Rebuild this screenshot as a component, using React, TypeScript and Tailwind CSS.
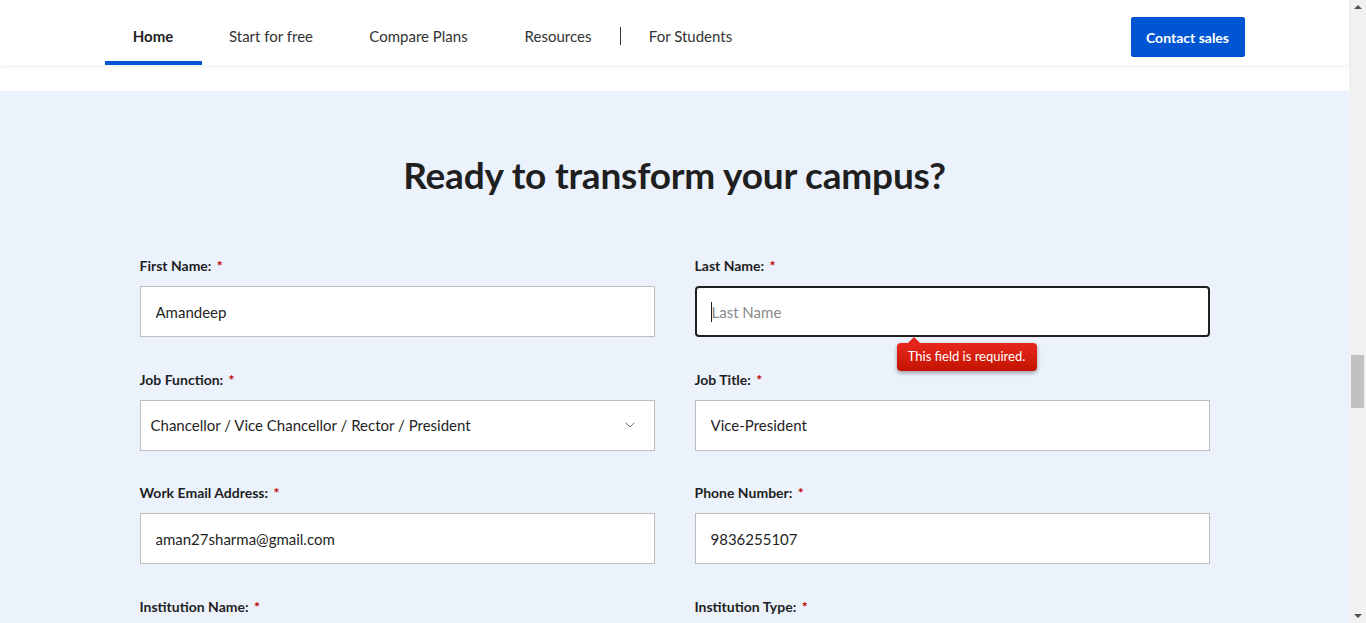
import { ChevronDown } from 'lucide-react';

const font = { fontFamily: 'Lato, "Open Sans", sans-serif' };

const navItems = [
  { label: 'Home', w: 'w-[97px]', active: true },
  { label: 'Start for free', w: 'w-[139px]' },
  { label: 'Compare Plans', w: 'w-[156px]' },
  { label: 'Resources', w: 'w-[123px]' },
];

function Label({ text }: { text: string }) {
  return (
    <div className="text-[14px] leading-[18px] font-bold text-[#1f1f1f] mb-[11px]">
      {text} <span className="text-[#c00000] ml-0.5">*</span>
    </div>
  );
}

function Field({ label, value }: { label: string; value: string }) {
  return (
    <div>
      <Label text={label} />
      <input
        readOnly
        value={value}
        className="w-full h-[51px] bg-white border border-[#bdbdbd] px-[15px] text-[15px] text-[#1f1f1f] outline-none"
        style={font}
      />
    </div>
  );
}

export default function App() {
  return (
    <div className="flex h-[623px] overflow-hidden bg-white" style={font}>
      <div className="flex-1 flex flex-col min-h-0">
        {/* top nav */}
        <header className="h-[65px] shrink-0 bg-white shadow-[0_2px_4px_rgba(0,0,0,0.06)] relative z-10">
          <div className="w-[1140px] mx-auto h-full flex items-center justify-between">
            <nav className="flex items-stretch h-full">
              {navItems.map((n) => (
                <a key={n.label}
                  className={`${n.w} pt-[11px] flex items-center justify-center text-[15px] border-b-4 ${n.active ? 'font-bold text-[#1f1f1f] border-[#0056d2]' : 'text-[#333] border-transparent'}`}>
                  {n.label}
                </a>
              ))}
              <div className="flex items-center pt-[11px] pb-1"><span className="block w-px h-[18px] bg-[#333]" /></div>
              <a className="w-[140px] pt-[11px] flex items-center justify-center text-[15px] text-[#333] border-b-4 border-transparent">For Students</a>
            </nav>
            <button className="w-[114px] h-[40px] mt-[9px] bg-[#0056d2] text-white text-[14px] font-bold rounded-[2px]">
              Contact sales
            </button>
          </div>
        </header>
        <div className="h-[26px] shrink-0 bg-white" />

        {/* form section */}
        <section className="flex-1 shrink-0 bg-[#ebf2fc] pt-[62px]">
          <h1 className="text-center text-[37px] leading-[44px] font-bold text-[#1f1f1f] tracking-[-0.2px]">
            Ready to transform your campus?
          </h1>
          <div className="w-[1070px] mx-auto mt-[60px] grid grid-cols-2 gap-x-10 gap-y-[33.5px]">
            <Field label="First Name:" value="Amandeep" />
            <div>
              <Label text="Last Name:" />
              <div className="relative">
                <input
                  readOnly
                  placeholder="Last Name"
                  className="w-full h-[51px] bg-white border-2 border-[#1f1f1f] rounded-[4px] px-[15px] text-[15px] placeholder:text-[#8a8a8a] outline-none"
                  style={font}
                />
                <span className="absolute left-[16px] top-[16px] w-px h-[20px] bg-[#1f1f1f]" />
                <div className="absolute left-[202px] top-[57px] z-10">
                  <span className="absolute left-[11px] -top-[6px] w-0 h-0 border-x-[6px] border-x-transparent border-b-[6px] border-b-[#e3221a]" />
                  <div className="w-[140px] h-[28px] flex items-center justify-center rounded-[4px] bg-gradient-to-b from-[#e8271c] to-[#c21400] text-white text-[13px] shadow-[0_2px_4px_rgba(0,0,0,0.35)]">
                    This field is required.
                  </div>
                </div>
              </div>
            </div>
            <div>
              <Label text="Job Function:" />
              <div className="h-[51px] bg-white border border-[#bdbdbd] pl-[10px] pr-[16px] flex items-center justify-between text-[15px] text-[#1f1f1f]">
                <span>Chancellor / Vice Chancellor / Rector / President</span>
                <ChevronDown size={16} strokeWidth={1.25} className="text-[#555]" />
              </div>
            </div>
            <Field label="Job Title:" value="Vice-President" />
            <Field label="Work Email Address:" value="aman27sharma@gmail.com" />
            <Field label="Phone Number:" value="9836255107" />
            <div><Label text="Institution Name:" /></div>
            <div><Label text="Institution Type:" /></div>
          </div>
        </section>
      </div>

      {/* scrollbar */}
      <div className="w-[17px] bg-[#f1f1f1] flex flex-col items-center justify-between py-[5px] relative">
        <span className="w-0 h-0 border-x-[4px] border-x-transparent border-b-[4px] border-b-[#505050]" />
        <span className="absolute left-[2px] top-[355px] w-[13px] h-[53px] bg-[#c1c1c1]" />
        <span className="w-0 h-0 border-x-[4px] border-x-transparent border-t-[4px] border-t-[#505050]" />
      </div>
    </div>
  );
}
